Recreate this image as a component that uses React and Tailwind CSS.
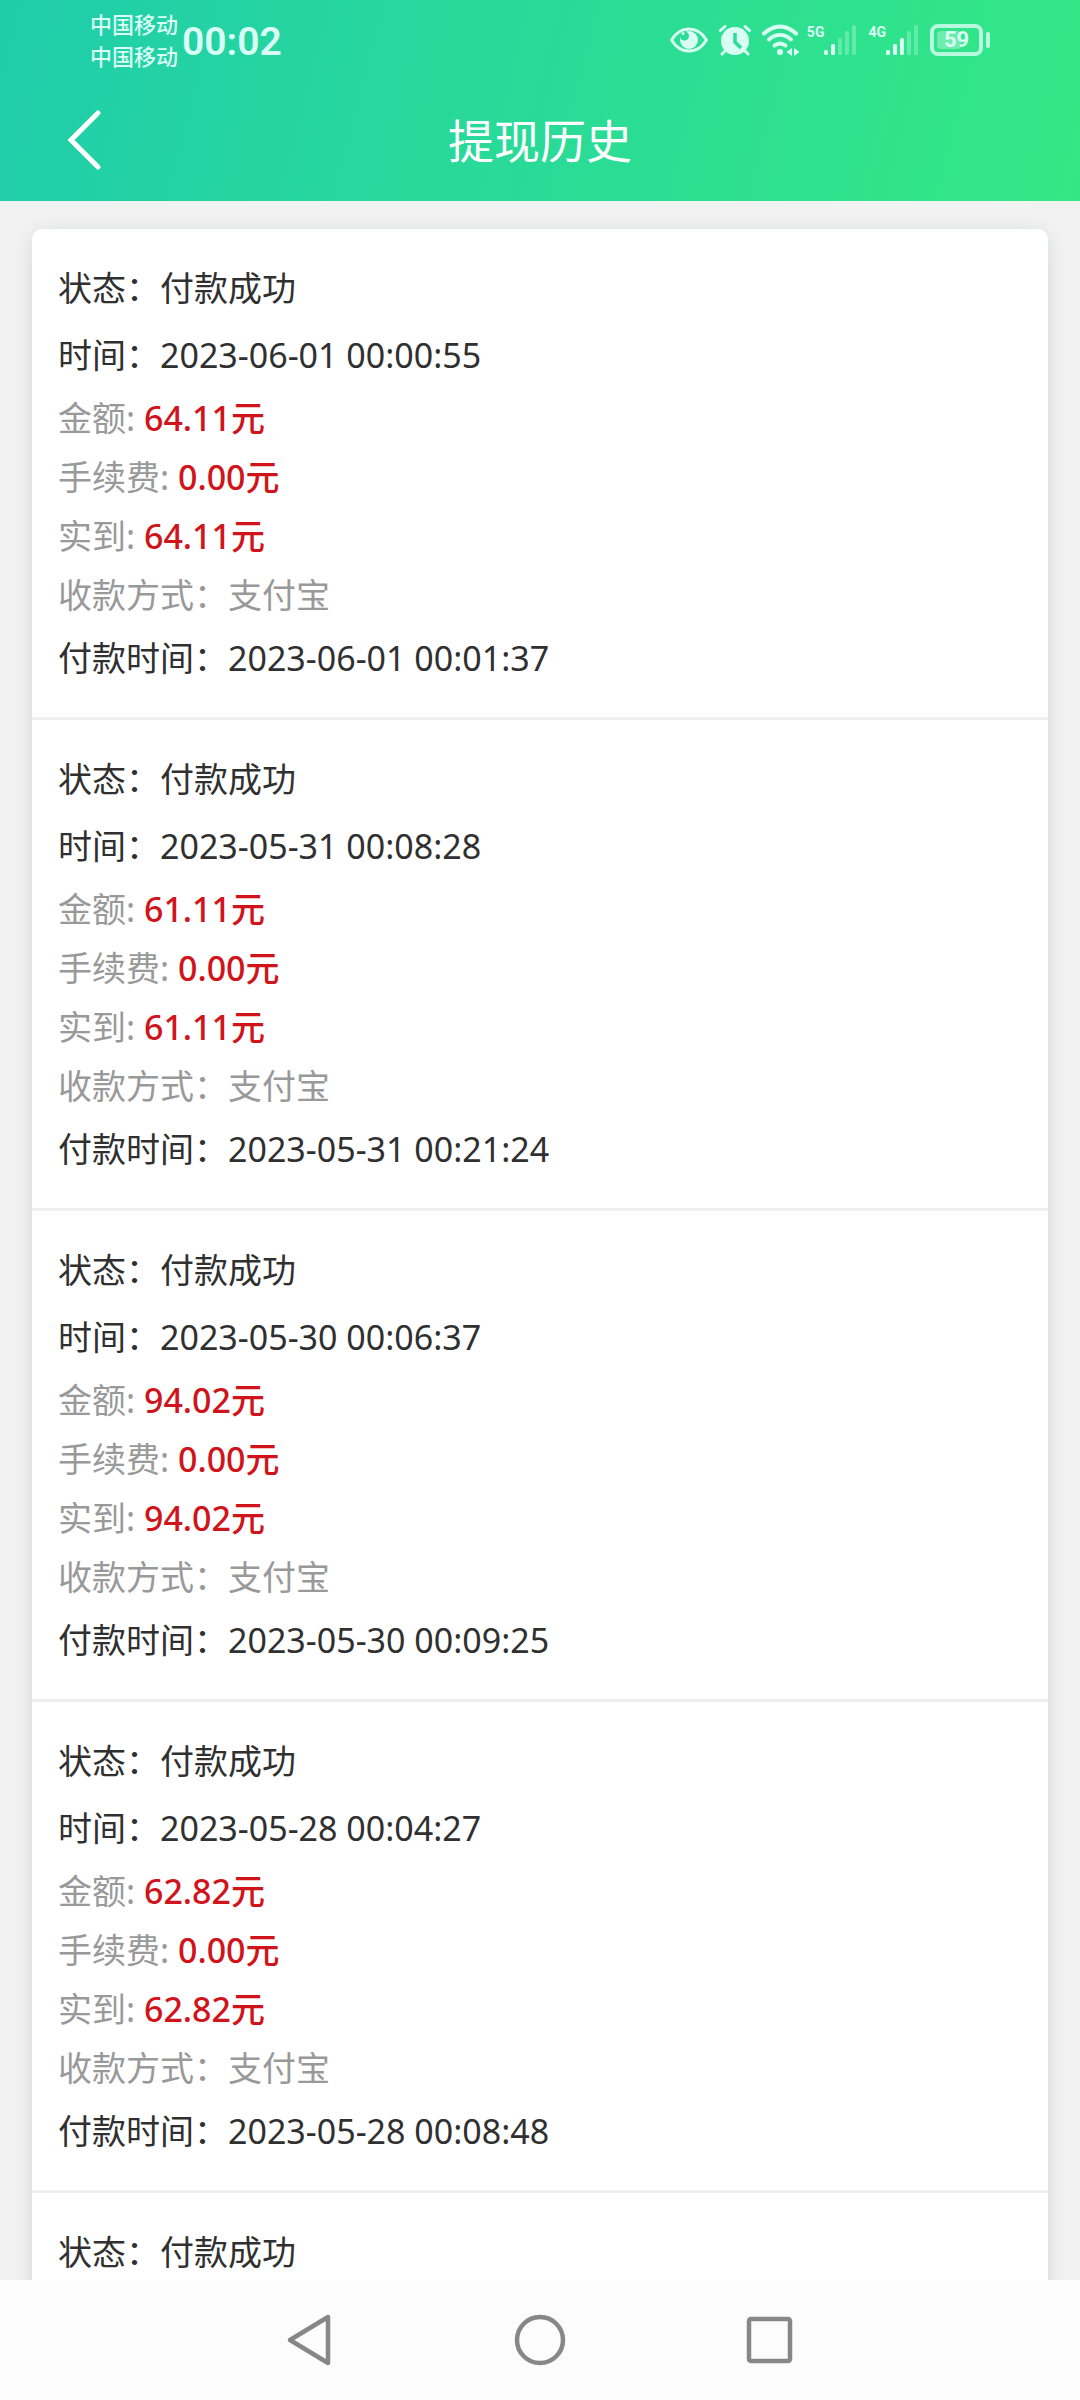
import React from 'react';

const records = [
  { id: 1, status: '付款成功', time: '2023-06-01 00:00:55', amount: '64.11元', fee: '0.00元', received: '64.11元', method: '支付宝', paidAt: '2023-06-01 00:01:37' },
  { id: 2, status: '付款成功', time: '2023-05-31 00:08:28', amount: '61.11元', fee: '0.00元', received: '61.11元', method: '支付宝', paidAt: '2023-05-31 00:21:24' },
  { id: 3, status: '付款成功', time: '2023-05-30 00:06:37', amount: '94.02元', fee: '0.00元', received: '94.02元', method: '支付宝', paidAt: '2023-05-30 00:09:25' },
  { id: 4, status: '付款成功', time: '2023-05-28 00:04:27', amount: '62.82元', fee: '0.00元', received: '62.82元', method: '支付宝', paidAt: '2023-05-28 00:08:48' },
  { id: 5, status: '付款成功' },
];

const EyeIcon = () => (
  <svg className="h-8 w-10" viewBox="0 0 40 32" fill="none">
    <path d="M2.5 16C7 8.5 13 5 20 5s13 3.5 17.5 11C33 23.5 27 27 20 27S7 23.5 2.5 16Z" stroke="currentColor" strokeWidth="3" strokeLinejoin="round" />
    <circle cx="20" cy="16" r="9" fill="currentColor" />
    <circle cx="15.5" cy="12" r="4.500" fill="#2bdb99" />
    <circle cx="14" cy="9.5" r="1.5" fill="currentColor" />
  </svg>
);

const AlarmIcon = () => (
  <svg className="h-8 w-8" viewBox="0 0 32 32" fill="none" stroke="currentColor" strokeLinecap="round">
    <circle cx="16" cy="17" r="14" fill="currentColor" stroke="none" />
    <path d="M1.5 6.5 6 2.5M30.5 6.5 26 2.5M6 27l-3 3M26 27l3 3" strokeWidth="3" />
    <path d="M16 9v9l6 6" stroke="#2bdd98" strokeWidth="3.5" strokeLinecap="butt" />
  </svg>
);

const WifiIcon = () => (
  <svg className="h-8 w-10" viewBox="0 0 40 32" fill="none" stroke="currentColor" strokeWidth="4" strokeLinecap="round">
    <path d="M3 9.5C13 0 25 0 35 9.5" />
    <path d="M8 15.5c7-6 15-6 22 0" />
    <path d="M13.5 21.5c4-3 7-3 11 0" />
    <circle cx="19" cy="28" r="3" fill="currentColor" stroke="none" />
    <path d="m31 24-5.5 4 5.5 4ZM33 24l5.5 4-5.5 4Z" fill="currentColor" stroke="none" />
  </svg>
);

const SignalIcon = ({ level }) => {
  const bars = [5, 11, 17, 24, 30];
  return (
    <svg className="h-8 w-[33px]" viewBox="0 0 33 32" fill="currentColor">
      {bars.map((height, i) => (
        <rect key={height} x={i * 7} y={31 - height} width="4" height={height} rx="1.5" opacity={i < level ? 1 : 0.3} />
      ))}
    </svg>
  );
};

const Signal = ({ network, level }) => (
  <div className="flex items-start">
    <span className="font-[Roboto,sans-serif] text-[14px] font-bold leading-4">{network}</span>
    <SignalIcon level={level} />
  </div>
);

const Battery = ({ percent }) => (
  <div className="flex items-center gap-[3px]">
    <div className="relative flex h-8 w-[53px] items-center justify-center rounded-lg border-4 border-current/80">
      <div className="absolute inset-y-[3px] left-[3px] rounded-sm bg-white/30" style={{ width: `${percent * 0.9}%` }} />
      <span className="relative font-[Roboto,sans-serif] text-[22px] font-bold leading-none">{percent}</span>
    </div>
    <div className="h-4 w-1 rounded-sm bg-current/80" />
  </div>
);

const StatusBar = () => (
  <div className="flex items-center justify-between pl-[90px] pr-[90px] pt-2 text-[#d9fff4]">
    <div className="flex items-center gap-1">
      <div className="text-[22px] font-medium leading-8">
        <p>中国移动</p>
        <p>中国移动</p>
      </div>
      <span className="pt-1 font-[Roboto,sans-serif] text-[39px] font-semibold leading-none">00:02</span>
    </div>
    <div className="flex items-center gap-[6px]">
      <div className="flex items-center gap-[10px]">
        <EyeIcon />
        <AlarmIcon />
        <WifiIcon />
      </div>
      <div className="flex items-center gap-[11px]">
        <Signal network="5G" level={2} />
        <Signal network="4G" level={3} />
        <Battery percent={59} />
      </div>
    </div>
  </div>
);

const TitleBar = () => (
  <div className="grid grid-cols-[1fr_auto_1fr] items-center px-16 pt-9 text-white">
    <button type="button" aria-label="返回" className="w-10">
      <svg className="h-16 w-10" viewBox="0 0 40 64" fill="none" stroke="currentColor" strokeWidth="5" strokeLinecap="round">
        <path d="M34 5 7 32l27 27" />
      </svg>
    </button>
    <h1 className="text-[46px] leading-[64px]">提现历史</h1>
  </div>
);

const MainRow = ({ label, value }) => (
  <p className="leading-[67px] text-[#303030]">
    {label}：{value}
  </p>
);

const MoneyRow = ({ label, value }) => (
  <p className="leading-[59px] text-[#999999]">
    {label}: <span className="font-medium text-[#d0141b]">{value}</span>
  </p>
);

const Record = ({ record }) => (
  <li className="border-b-[3px] border-[#efefef] px-[26px] pb-[25px] pt-[26px]">
    <MainRow label="状态" value={record.status} />
    {record.time && (
      <>
        <MainRow label="时间" value={record.time} />
        <MoneyRow label="金额" value={record.amount} />
        <MoneyRow label="手续费" value={record.fee} />
        <MoneyRow label="实到" value={record.received} />
        <p className="leading-[59px] text-[#999999]">收款方式：{record.method}</p>
        <MainRow label="付款时间" value={record.paidAt} />
      </>
    )}
  </li>
);

const NavBar = () => (
  <nav className="flex h-[120px] shrink-0 items-center justify-center gap-[174px] bg-[#fcfcfc] text-[#878787]">
    <button type="button" aria-label="后退">
      <svg className="h-14 w-14" viewBox="0 0 56 56" fill="none" stroke="currentColor" strokeWidth="4.5" strokeLinejoin="round">
        <path d="M8 28 46 5v46Z" />
      </svg>
    </button>
    <button type="button" aria-label="主页">
      <svg className="h-14 w-14" viewBox="0 0 56 56" fill="none" stroke="currentColor" strokeWidth="4.5">
        <circle cx="28" cy="28" r="23" />
      </svg>
    </button>
    <button type="button" aria-label="最近任务">
      <svg className="h-14 w-14" viewBox="0 0 56 56" fill="none" stroke="currentColor" strokeWidth="4.5">
        <rect x="7" y="7" width="41" height="42" rx="2" />
      </svg>
    </button>
  </nav>
);

export default function App() {
  return (
    <div className="flex h-screen flex-col bg-[#f2f2f2] font-['Noto_Sans','Noto_Sans_CJK_SC',sans-serif]">
      <header className="h-[201px] shrink-0 bg-linear-[105deg,#20cdab,#33e884]">
        <StatusBar />
        <TitleBar />
      </header>
      <main className="min-h-0 flex-1 overflow-y-auto px-8 pt-7 [scrollbar-width:none]">
        <ul className="rounded-[10px] bg-white text-[34px] shadow-[0_4px_20px_rgba(0,50,40,0.12)]">
          {records.map((record) => (
            <Record key={record.id} record={record} />
          ))}
        </ul>
      </main>
      <NavBar />
    </div>
  );
}
